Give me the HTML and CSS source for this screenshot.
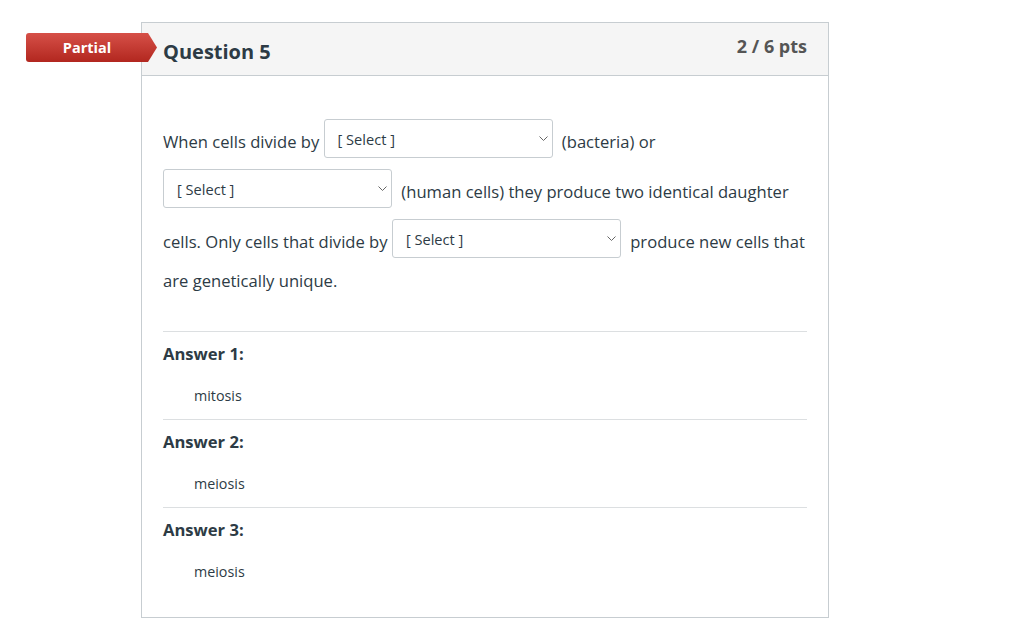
FILE: index.html
```html
<!DOCTYPE html>
<html lang="en">
<head>
  <meta charset="UTF-8" />
  <title>Question 5</title>
  <link rel="stylesheet" href="styles.css">
</head>
<body>
  <div class="question">
    <div class="badge">Partial</div>
    <div class="question-header">
      <h2>Question 5</h2>
      <span class="pts">2 / 6 pts</span>
    </div>

    <div class="question-body">
      <p class="question-text">
        When cells divide by
        <span class="sel-wrap"><select class="sel"><option>[ Select ]</option><option>mitosis</option><option>meiosis</option><option>binary fission</option></select><svg class="chev" width="9" height="5" viewBox="0 0 9 5"><path d="M0.5 0.5 L4.5 4.5 L8.5 0.5" fill="none" stroke="#666" stroke-width="1"/></svg></span>
        (bacteria) or
        <span class="sel-wrap"><select class="sel"><option>[ Select ]</option><option>mitosis</option><option>meiosis</option><option>binary fission</option></select><svg class="chev" width="9" height="5" viewBox="0 0 9 5"><path d="M0.5 0.5 L4.5 4.5 L8.5 0.5" fill="none" stroke="#666" stroke-width="1"/></svg></span>
        (human cells) they produce two identical daughter cells. Only cells that divide by
        <span class="sel-wrap"><select class="sel"><option>[ Select ]</option><option>mitosis</option><option>meiosis</option><option>binary fission</option></select><svg class="chev" width="9" height="5" viewBox="0 0 9 5"><path d="M0.5 0.5 L4.5 4.5 L8.5 0.5" fill="none" stroke="#666" stroke-width="1"/></svg></span>
        produce new cells that are genetically unique.
      </p>

      <div class="answers">
        <div class="answer">
          <div class="answer-label">Answer 1:</div>
          <div class="answer-value">mitosis</div>
        </div>
        <div class="answer">
          <div class="answer-label">Answer 2:</div>
          <div class="answer-value">meiosis</div>
        </div>
        <div class="answer">
          <div class="answer-label">Answer 3:</div>
          <div class="answer-value">meiosis</div>
        </div>
      </div>
    </div>
  </div>
</body>
</html>
```

FILE: styles.css
```css
body {
  margin: 0;
  font-family: "Open Sans", "Liberation Sans", Arial, sans-serif;
  color: #2d3b45;
  background-color: white;
}

.question {
  position: relative;
  width: 686px;
  margin: 22px 0 0 141px;
  border: 1px solid #c7cdd1;
}

.badge {
  position: absolute;
  top: 10px;
  left: -116px;
  width: 122px;
  height: 29px;
  padding-right: 9px;
  line-height: 29px;
  text-align: center;
  color: white;
  font-size: 14.5px;
  font-weight: bold;
  background: linear-gradient(#d65048, #b2271f);
  border-radius: 3px 0 0 3px;
  clip-path: polygon(0 0, 122px 0, 131px 50%, 122px 100%, 0 100%);
}

.question-header {
  display: flex;
  justify-content: space-between;
  align-items: flex-start;
  height: 52px;
  padding: 0 21px;
  background-color: #f5f5f5;
  border-bottom: 1px solid #c7cdd1;
}

.question-header h2 {
  margin: 15px 0 0;
  font-size: 20px;
  line-height: 28px;
  font-weight: bold;
  color: #2d3b45;
}

.pts {
  margin-top: 11px;
  font-size: 18px;
  line-height: 24px;
  font-weight: bold;
  color: #555;
}

.question-body {
  padding: 43px 21px 22px;
}

.question-text {
  margin: 0 0 38px;
  font-size: 16.6px;
  line-height: 24px;
}

.sel-wrap {
  position: relative;
  display: inline-block;
  margin: 0 5px 11px 0;
  vertical-align: middle;
  line-height: 0;
}

.sel {
  width: 229px;
  height: 39px;
  margin: 0;
  padding: 0 24px 0 13px;
  font-family: inherit;
  font-size: 14.6px;
  color: #2d3b45;
  background-color: white;
  border: 1px solid #c7cdd1;
  border-radius: 3px;
  appearance: none;
  -webkit-appearance: none;
}

.chev {
  position: absolute;
  top: 17px;
  right: 5px;
  pointer-events: none;
}

.answer {
  border-top: 1px solid #dcdfe1;
  padding: 10px 0 13px;
}

.answer-label {
  font-size: 16.6px;
  line-height: 24px;
  font-weight: bold;
}

.answer-value {
  margin-top: 20px;
  padding-left: 31px;
  font-size: 14.3px;
  line-height: 20px;
}
```
